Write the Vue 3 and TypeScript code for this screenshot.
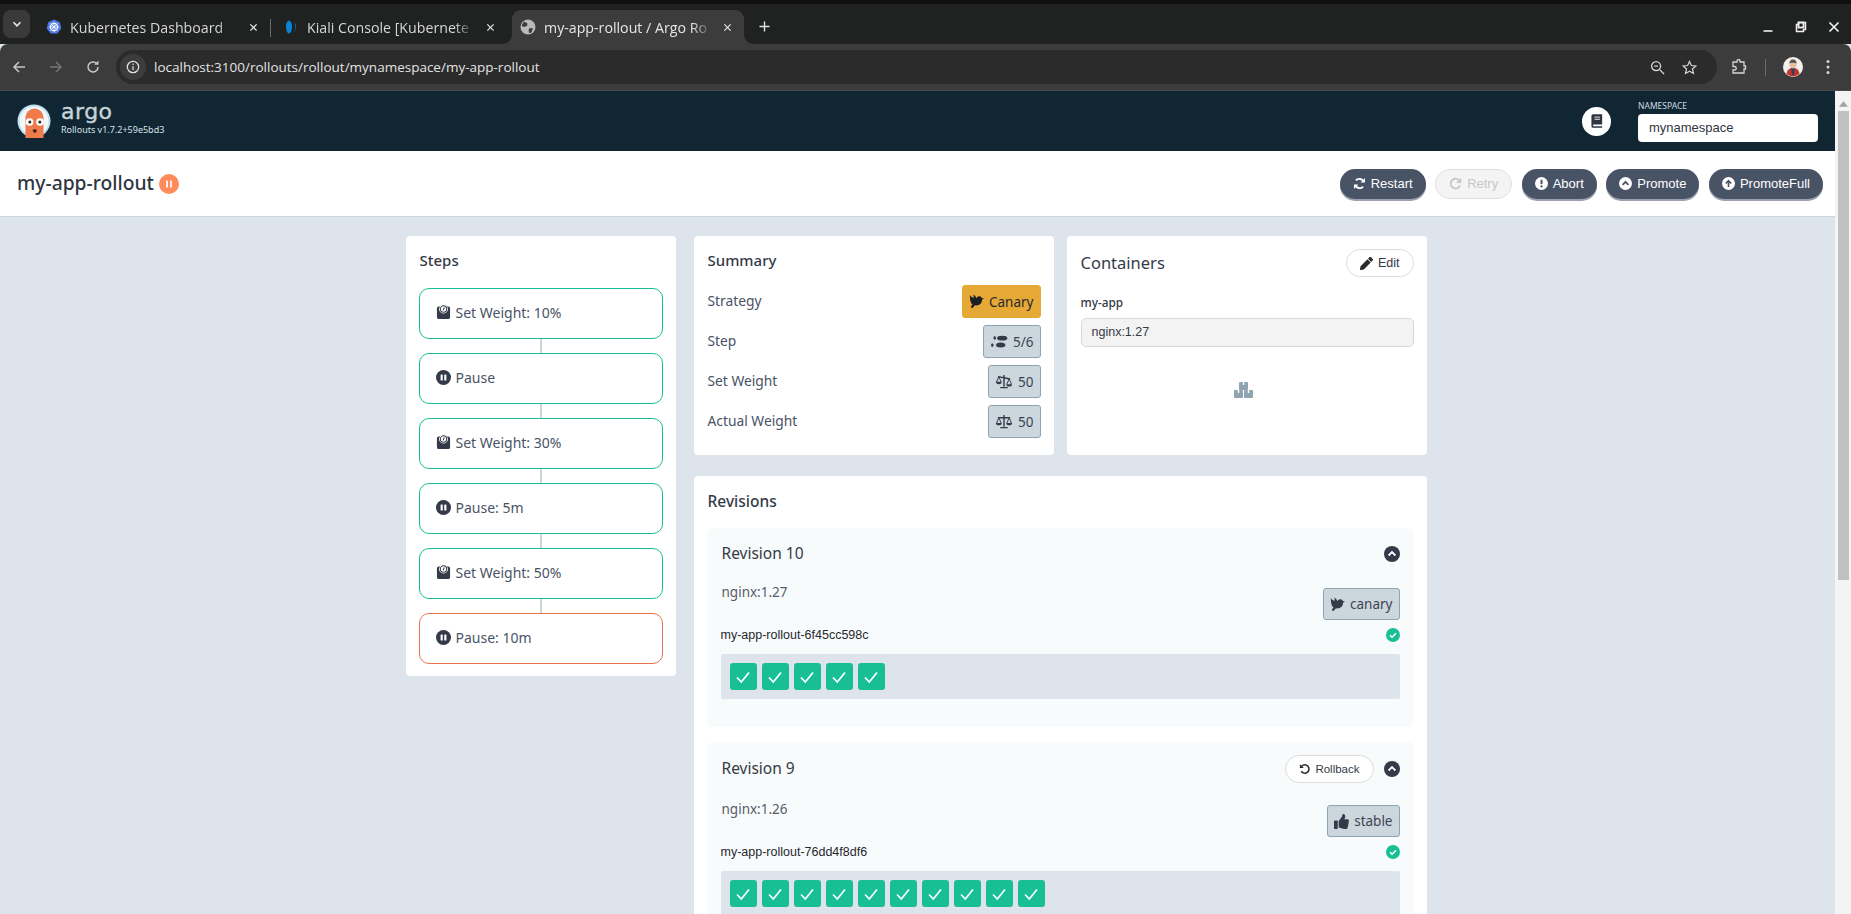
<script setup lang="ts">
interface Step { icon: string; label: string; current?: boolean }
interface Tab { id: string; label: string; active?: boolean }
interface Action { label: string; icon: string; disabled?: boolean }
interface Row { label: string; value: string; icon: string; canary?: boolean }
interface Revision { id: number; image: string; badge: string; icon: string; rs: string; pods: number; rollback?: boolean }

const tabs: Tab[] = [
  { id: 'k8s', label: 'Kubernetes Dashboard' },
  { id: 'kiali', label: 'Kiali Console [Kubernete' },
  { id: 'globe', label: 'my-app-rollout / Argo Ro', active: true },
]
const actions: Action[] = [
  { label: 'Restart', icon: 'i-sync' },
  { label: 'Retry', icon: 'i-redo', disabled: true },
  { label: 'Abort', icon: 'i-excl' },
  { label: 'Promote', icon: 'i-chev' },
  { label: 'PromoteFull', icon: 'i-arrow' },
]
const steps: Step[] = [
  { icon: 'i-weight', label: 'Set Weight: 10%' },
  { icon: 'i-pause', label: 'Pause' },
  { icon: 'i-weight', label: 'Set Weight: 30%' },
  { icon: 'i-pause', label: 'Pause: 5m' },
  { icon: 'i-weight', label: 'Set Weight: 50%' },
  { icon: 'i-pause', label: 'Pause: 10m', current: true },
]
const rows: Row[] = [
  { label: 'Strategy', value: 'Canary', icon: 'i-dove', canary: true },
  { label: 'Step', value: '5/6', icon: 'i-shoes' },
  { label: 'Set Weight', value: '50', icon: 'i-scale-tilt' },
  { label: 'Actual Weight', value: '50', icon: 'i-scale' },
]
const revisions: Revision[] = [
  { id: 10, image: 'nginx:1.27', badge: 'canary', icon: 'i-dove', rs: 'my-app-rollout-6f45cc598c', pods: 5 },
  { id: 9, image: 'nginx:1.26', badge: 'stable', icon: 'i-thumb', rs: 'my-app-rollout-76dd4f8df6', pods: 10, rollback: true },
]
</script>

<template>
  <div class="screen">
    <svg class="sprite" aria-hidden="true">
      <defs>
        <symbol id="i-sync" viewBox="0 0 16 16"><path d="M13.2 6.2A5.6 5.6 0 0 0 3.6 4.3M2.8 9.8a5.6 5.6 0 0 0 9.6 1.9" fill="none" stroke="currentColor" stroke-width="2.4"/><path d="M14.8 1.2v5.6H9.4zM1.2 14.8V9.2h5.4z" fill="currentColor"/></symbol>
        <symbol id="i-redo" viewBox="0 0 16 16"><path d="M12.4 4A6 6 0 1 0 13.6 10.4" fill="none" stroke="currentColor" stroke-width="2.2"/><path d="M15 1v6.4H8.8z" fill="currentColor"/></symbol>
        <symbol id="i-excl" viewBox="0 0 16 16"><circle cx="8" cy="8" r="8" fill="currentColor"/><path d="M8 3.4v5.4" stroke="#495366" stroke-width="2.4"/><circle cx="8" cy="11.6" r="1.4" fill="#495366"/></symbol>
        <symbol id="i-chev" viewBox="0 0 16 16"><circle cx="8" cy="8" r="8" fill="currentColor"/><path d="M4.4 9.6 8 6l3.6 3.6" fill="none" stroke="#495366" stroke-width="2.2"/></symbol>
        <symbol id="i-arrow" viewBox="0 0 16 16"><circle cx="8" cy="8" r="8" fill="currentColor"/><path d="M8 12.4V4.600M4.600 8 8 4.600 11.400 8" fill="none" stroke="#495366" stroke-width="2"/></symbol>
        <symbol id="i-weight" viewBox="0 0 16 16"><path d="M3 1.500h1.400a4.600 4.600 0 1 0 7.200 0H13A2 2 0 0 1 15 3.500V13a2 2 0 0 1-2 2H3a2 2 0 0 1-2-2V3.500a2 2 0 0 1 2-2z" fill="currentColor"/><circle cx="8" cy="4.300" r="3.400" fill="none" stroke="currentColor" stroke-width="1.100"/><path d="M7.500 5.600 8.900 2.700" stroke="currentColor" stroke-width="1.100"/></symbol>
        <symbol id="i-pause" viewBox="0 0 16 16"><circle cx="8" cy="8" r="8" fill="currentColor"/><rect x="4.900" y="4.800" width="2.300" height="6.400" rx=".6" fill="#fff"/><rect x="8.800" y="4.800" width="2.300" height="6.400" rx=".6" fill="#fff"/></symbol>
        <symbol id="i-dove" viewBox="0 0 16 16"><path d="M1 1.200C2 2.800 3.500 3.600 5 4L4.800.6C6.200 1.300 7.200 2.800 7.800 4.600 8.500 3 9.800 2.200 11.200 2.400 12.400 2.500 13.300 3.300 13.600 4.300L15.900 4.900 13.900 6.200C13.900 10 11.200 12.200 8 12.200L6.400 12 3.400 15.200 1.800 13.600 3.800 11.200C1.600 9.500.7 5 1 1.200z" fill="currentColor"/></symbol>
        <symbol id="i-shoes" viewBox="0 0 18 16"><ellipse cx="12.400" cy="4.400" rx="5.400" ry="2.600" fill="currentColor"/><ellipse cx="10.800" cy="11.800" rx="5" ry="2.700" fill="currentColor"/><rect x="3.200" y="2.400" width="2.500" height="3.600" rx="1.200" fill="currentColor"/><rect x=".6" y="10" width="2.500" height="3.600" rx="1.200" fill="currentColor"/></symbol>
        <symbol id="i-scale" viewBox="0 0 18 16"><path d="M9 1v12.500M5 14.500h8M2.500 4h13" stroke="currentColor" stroke-width="1.500" fill="none"/><path d="M3.500 4 1 9.800M3.500 4 6 9.800M14.500 4 12 9.800M14.500 4 17 9.800" stroke="currentColor" stroke-width="1" fill="none"/><path d="M.4 9.500h6.200a3.100 2.600 0 0 1-6.200 0zM11.400 9.500h6.200a3.100 2.600 0 0 1-6.200 0z" fill="currentColor"/></symbol>
        <symbol id="i-scale-tilt" viewBox="0 0 18 16"><path d="M9 1v12.500M5 14.500h8M2.500 2.800l13 2.600" stroke="currentColor" stroke-width="1.500" fill="none"/><path d="M3.500 3 1 8.500M3.500 3 6 8.500M14.500 5.200 12 11M14.500 5.200 17 11" stroke="currentColor" stroke-width="1" fill="none"/><path d="M.4 8.300h6.200a3.100 2.600 0 0 1-6.200 0zM11.400 10.800h6.200a3.100 2.600 0 0 1-6.200 0z" fill="currentColor"/></symbol>
        <symbol id="i-thumb" viewBox="0 0 512 512"><path fill="currentColor" d="M104 224H24c-13.255 0-24 10.745-24 24v240c0 13.255 10.745 24 24 24h80c13.255 0 24-10.745 24-24V248c0-13.255-10.745-24-24-24zM384 81.452c0 42.416-25.97 66.208-33.277 94.548h101.723c33.397 0 59.397 27.746 59.553 58.098.084 17.938-7.546 37.249-19.439 49.197l-.11.11c9.836 23.337 8.237 56.037-9.308 79.469 8.681 25.895-.069 57.704-16.382 74.757 4.298 17.598 2.244 32.575-6.148 44.632C440.202 511.587 389.616 512 346.839 512l-2.845-.001c-48.287-.017-87.806-17.598-119.56-31.725-15.957-7.099-36.821-15.887-52.651-16.178-6.54-.12-11.783-5.457-11.783-11.998v-213.77c0-3.2 1.282-6.271 3.558-8.521 39.614-39.144 56.648-80.587 89.117-113.111 14.804-14.832 20.188-37.236 25.393-58.902C282.515 39.293 291.817 0 312 0c24 0 72 8 72 81.452z"/></symbol>
        <symbol id="i-pencil" viewBox="0 0 512 512"><path fill="currentColor" d="M497.9 142.1l-46.1 46.1c-4.7 4.7-12.3 4.7-17 0l-111-111c-4.7-4.7-4.7-12.3 0-17l46.1-46.1c18.7-18.7 49.1-18.7 67.9 0l60.1 60.1c18.8 18.7 18.8 49.1 0 67.9zM284.2 99.8L21.6 362.4.4 483.9c-2.9 16.4 11.4 30.6 27.8 27.8l121.5-21.3 262.6-262.6c4.7-4.7 4.7-12.3 0-17l-111-111c-4.8-4.7-12.4-4.7-17.1 0z"/></symbol>
      </defs>
    </svg>

    <div class="strip">
      <div class="tab-menu"><svg width="12" height="12" viewBox="0 0 12 12"><path d="M2.500 4.200 6 7.800l3.500-3.600" fill="none" stroke="#e6e6e6" stroke-width="1.600"/></svg></div>
      <div v-for="tab in tabs" :key="tab.id" class="tab" :class="{ active: tab.active }">
        <svg v-if="tab.id === 'k8s'" class="fav" viewBox="0 0 16 16"><path d="M8 .5l5.800 2.800 1.500 6.300-4 5H4.700l-4-5 1.500-6.300z" fill="#4f78e8"/><circle cx="8" cy="8" r="3.600" fill="none" stroke="#fff" stroke-width="1.200"/><path d="M8 2.800v10.400M3 8h10M4.400 4.400l7.200 7.200M11.600 4.400l-7.200 7.200" stroke="#fff" stroke-width=".8"/></svg>
        <svg v-else-if="tab.id === 'kiali'" class="fav" viewBox="0 0 16 16"><ellipse cx="6" cy="8" rx="3" ry="6.400" fill="#0a84d6"/><path d="M10 1.800a3 6.400 0 0 1 0 12.400 8 8 0 0 0 0-12.400z" fill="#0a84d6"/></svg>
        <svg v-else class="fav" viewBox="0 0 16 16"><circle cx="8" cy="8" r="7.500" fill="#b8babd"/><path d="M4 2.600 7.500 4.500 7 7 3.800 8 1.500 6.500zM9.500 9l3.500.5-1.600 4-2.200.8-.6-3z" fill="#3c3c3c"/></svg>
        <span class="tab-label">{{ tab.label }}</span>
        <svg class="tab-close" viewBox="0 0 10 10"><path d="M1.500 1.500l7 7M8.500 1.500l-7 7" stroke="#e3e3e3" stroke-width="1.400"/></svg>
      </div>
      <svg class="tab-plus" viewBox="0 0 12 12"><path d="M6 .5v11M.5 6h11" stroke="#e3e3e3" stroke-width="1.500"/></svg>
      <div class="win">
        <svg viewBox="0 0 12 12"><path d="M1.500 10h9" stroke="#f0f0f0" stroke-width="1.600"/></svg>
        <svg viewBox="0 0 12 12"><path d="M3.500 1.500h7v7h-2v2h-7v-7h2z" fill="none" stroke="#f0f0f0" stroke-width="1.500"/><rect x="3.500" y="1.500" width="5" height="5" fill="none" stroke="#f0f0f0" stroke-width="1.800"/></svg>
        <svg viewBox="0 0 12 12"><path d="M1.500 1.500l9 9M10.500 1.500l-9 9" stroke="#f0f0f0" stroke-width="1.700"/></svg>
      </div>
    </div>

    <div class="toolbar">
      <svg class="nav" viewBox="0 0 16 16"><path d="M14 8H3M8 3 3 8l5 5" fill="none" stroke="#c7c7c7" stroke-width="1.500"/></svg>
      <svg class="nav" viewBox="0 0 16 16"><path d="M2 8h11M8 3l5 5-5 5" fill="none" stroke="#757575" stroke-width="1.500"/></svg>
      <svg class="nav" viewBox="0 0 16 16"><path d="M13 8a5 5 0 1 1-1.500-3.600" fill="none" stroke="#c7c7c7" stroke-width="1.500"/><path d="M13.500 1.500v4.300H9.200z" fill="#c7c7c7"/></svg>
      <div class="omni">
        <span class="info"><svg viewBox="0 0 16 16" width="14" height="14"><circle cx="8" cy="8" r="6.500" fill="none" stroke="#e3e3e3" stroke-width="1.400"/><path d="M8 7.200v4.300" stroke="#e3e3e3" stroke-width="1.400"/><circle cx="8" cy="4.900" r=".9" fill="#e3e3e3"/></svg></span>
        <span class="url">localhost:3100/rollouts/rollout/mynamespace/my-app-rollout</span>
        <svg class="omni-ic zoom" viewBox="0 0 16 16"><circle cx="6.500" cy="6.500" r="4.800" fill="none" stroke="#d5d5d5" stroke-width="1.400"/><path d="M10 10l5 5M4.500 6.500h4" stroke="#d5d5d5" stroke-width="1.400"/></svg>
        <svg class="omni-ic" viewBox="0 0 16 16"><path d="M8 1.500l2 4.400 4.700.5-3.500 3.200 1 4.700L8 11.900l-4.200 2.400 1-4.700L1.300 6.400 6 5.900z" fill="none" stroke="#d5d5d5" stroke-width="1.300"/></svg>
      </div>
      <svg class="ext" viewBox="0 0 16 16"><path d="M2 3h4V2a1.500 1.500 0 0 1 3 0v1h4v4h1.500v3H13v4H2v-3h1.500a1.700 1.700 0 0 0 0-3.500H2z" fill="none" stroke="#d5d5d5" stroke-width="1.300"/></svg>
      <span class="tool-sep"></span>
      <svg class="avatar" viewBox="0 0 20 20"><circle cx="10" cy="10" r="10" fill="#f2f0ee"/><path d="M3.500 17c.5-4 2.500-6 6.500-6s6 2 6.500 6a10 10 0 0 1-13 0z" fill="#c4372e"/><path d="M8 11h4l-1 7H9z" fill="#30415a"/><ellipse cx="10" cy="7" rx="3.600" ry="4.400" fill="#e8c0a0"/><path d="M6.300 6.500C6.500 3.500 8 2.400 10 2.400s3.500 1.100 3.700 4.100C12 5.500 8 5.500 6.300 6.500z" fill="#555"/></svg>
      <svg class="dots" viewBox="0 0 4 16"><circle cx="2" cy="2.500" r="1.500" fill="#d5d5d5"/><circle cx="2" cy="8" r="1.500" fill="#d5d5d5"/><circle cx="2" cy="13.500" r="1.500" fill="#d5d5d5"/></svg>
    </div>

    <div class="viewport">
      <div class="page">
        <header class="topbar">
          <svg class="logo" viewBox="0 0 34 34">
            <circle cx="17" cy="17" r="16.500" fill="#bfe0ee"/>
            <circle cx="17" cy="17" r="14.500" fill="#f2f7fa"/>
            <path d="M8.500 34V13.500a9 9 0 0 1 18 0V34z" fill="#ef7b4d"/>
            <circle cx="12.600" cy="18" r="3.800" fill="#fff"/><circle cx="23" cy="18" r="3.800" fill="#fff"/>
            <circle cx="12.800" cy="18" r="1.500" fill="#2a2a2a"/><circle cx="22.800" cy="18" r="1.500" fill="#2a2a2a"/>
            <path d="M15.800 25.500h4c0 2-.8 3.200-2 3.200s-2-1.200-2-3.200z" fill="#3a1d14"/>
          </svg>
          <div class="brand">
            <div class="argo">argo</div>
            <div class="ver">Rollouts v1.7.2+59e5bd3</div>
          </div>
          <div class="top-right">
            <div class="book"><svg viewBox="0 0 14 16" width="12" height="14"><path d="M2.500 0H13v12H3a1.200 1.200 0 0 0 0 2.200h10V16H2.500A2 2 0 0 1 .5 14V2a2 2 0 0 1 2-2z" fill="#2f3542"/><path d="M4 3.500h6.500M4 6h6.500" stroke="#fff" stroke-width="1"/></svg></div>
            <div class="ns">
              <div class="ns-label">NAMESPACE</div>
              <div class="ns-input">mynamespace</div>
            </div>
          </div>
        </header>

        <div class="titlebar">
          <span class="rollout-name">my-app-rollout</span>
          <span class="pause-badge"><svg viewBox="0 0 16 16" width="8" height="10"><rect x="2" y="1" width="4" height="14" rx="1" fill="#fff" fill-opacity=".85"/><rect x="10" y="1" width="4" height="14" rx="1" fill="#fff" fill-opacity=".85"/></svg></span>
          <div class="actions">
            <button v-for="a in actions" :key="a.label" class="act" :class="{ off: a.disabled }">
              <svg class="act-ic"><use :href="'#' + a.icon" /></svg>{{ a.label }}
            </button>
          </div>
        </div>

        <main class="content">
          <section class="card steps">
            <h3 class="steps-title">Steps</h3>
            <div class="step-list">
              <div v-for="s in steps" :key="s.label" class="step" :class="{ current: s.current }">
                <svg class="step-ic"><use :href="'#' + s.icon" /></svg>
                <span class="step-text">{{ s.label }}</span>
              </div>
            </div>
          </section>

          <div class="right">
            <div class="two">
              <section class="card summary">
                <h3 class="steps-title sum-title">Summary</h3>
                <div v-for="r in rows" :key="r.label" class="sum-row">
                  <span class="sum-label">{{ r.label }}</span>
                  <span class="chip" :class="{ canary: r.canary }">
                    <svg class="chip-ic" :class="{ wide: !r.canary }"><use :href="'#' + r.icon" /></svg>{{ r.value }}
                  </span>
                </div>
              </section>
              <section class="card containers">
                <div class="cont-head">
                  <h3 class="cont-title">Containers</h3>
                  <button class="pill"><svg class="pill-ic"><use href="#i-pencil" /></svg>Edit</button>
                </div>
                <div class="cont-name">my-app</div>
                <div class="cont-input">nginx:1.27</div>
                <div class="boxes">
                  <svg viewBox="0 0 19 16" width="19" height="16"><path d="M6 0h2.800v3h1.400V0H13a1 1 0 0 1 1 1v6a1 1 0 0 1-1 1H6a1 1 0 0 1-1-1V1a1 1 0 0 1 1-1zM1 8h2.800v3h1.400V8H8a1 1 0 0 1 1 1v6a1 1 0 0 1-1 1H1a1 1 0 0 1-1-1V9a1 1 0 0 1 1-1zM11 8h2.800v3h1.400V8H18a1 1 0 0 1 1 1v6a1 1 0 0 1-1 1h-7a1 1 0 0 1-1-1V9a1 1 0 0 1 1-1z" fill="#8fa4b1"/></svg>
                </div>
              </section>
            </div>

            <section class="card revisions">
              <h3 class="rev-heading">Revisions</h3>
              <div v-for="rev in revisions" :key="rev.id" class="rev">
                <div class="rev-head">
                  <span class="rev-title">Revision {{ rev.id }}</span>
                  <button v-if="rev.rollback" class="pill small"><svg class="roll-ic" viewBox="0 0 16 16"><path d="M3.600 4.200A5.600 5.600 0 1 1 3 11" fill="none" stroke="currentColor" stroke-width="2"/><path d="M1.200 1.500v5.300h5.300z" fill="currentColor"/></svg>Rollback</button>
                  <svg class="collapse" viewBox="0 0 16 16"><circle cx="8" cy="8" r="8" fill="#343a4a"/><path d="M4.600 9.500 8 6.100l3.400 3.400" fill="none" stroke="#fff" stroke-width="1.800"/></svg>
                </div>
                <div class="rev-img">
                  <span class="img-name">{{ rev.image }}</span>
                  <span class="chip rev-chip"><svg class="chip-ic"><use :href="'#' + rev.icon" /></svg>{{ rev.badge }}</span>
                </div>
                <div class="rs">
                  <span>{{ rev.rs }}</span>
                  <svg class="ok" viewBox="0 0 14 14"><circle cx="7" cy="7" r="7" fill="#18be94"/><path d="M4 7.200l2.100 2.100L10 5.200" fill="none" stroke="#fff" stroke-width="1.500"/></svg>
                </div>
                <div class="pods">
                  <div v-for="n in rev.pods" :key="n" class="pod"><svg viewBox="0 0 16 16" width="16" height="16"><path d="M2 8.500 6.300 13 14 3.500" fill="none" stroke="#fff" stroke-width="1.700"/></svg></div>
                </div>
              </div>
            </section>
          </div>
        </main>
      </div>
      <div class="scrollbar">
        <svg viewBox="0 0 10 6" width="9" height="6"><path d="M5 0l5 6H0z" fill="#a3a3a3"/></svg>
        <div class="thumb"></div>
      </div>
    </div>
  </div>
</template>

<style>
html, body { margin: 0; overflow: hidden; background: #dee4eb; }
</style>

<style scoped>
.screen { width: 1851px; height: 914px; overflow: hidden; display: flex; flex-direction: column; font-family: "Noto Sans", sans-serif; color: #495366; position: relative; }
.sprite { position: absolute; width: 0; height: 0; }
h3 { margin: 0; font-weight: 500; }
button { font-family: "Liberation Sans", sans-serif; cursor: pointer; }

.strip { height: 40px; flex: none; background: #202222; border-top: 4px solid #101010; display: flex; align-items: flex-end; padding-left: 3px; position: relative; box-sizing: content-box; }
.tab-menu { width: 27px; height: 28px; margin-bottom: 6px; border-radius: 8px; background: #3a3a3a; display: flex; align-items: center; justify-content: center; margin-right: 8px; }
.tab { width: 230px; height: 34px; margin-right: 7px; display: flex; align-items: center; padding-left: 8px; box-sizing: border-box; position: relative; color: #d6d6d6; }
.tab:nth-child(2)::after { content: ""; position: absolute; right: -3px; top: 9px; width: 1px; height: 18px; background: #6b6b6b; }
.tab.active { width: 232px; background: #3c3c3c; border-radius: 9px 9px 0 0; color: #e6e6e6; }
.tab.active::before, .tab.active::after { content: ""; position: absolute; bottom: 0; width: 9px; height: 9px; }
.tab.active::before { left: -9px; background: radial-gradient(circle at 0 0, transparent 8.500px, #3c3c3c 9px); }
.tab.active::after { right: -9px; background: radial-gradient(circle at 100% 0, transparent 8.500px, #3c3c3c 9px); }
.fav { width: 16px; height: 16px; flex: none; }
.tab-label { margin-left: 8px; width: 168px; white-space: nowrap; overflow: hidden; flex: none; -webkit-mask-image: linear-gradient(90deg, #000 88%, transparent); mask-image: linear-gradient(90deg, #000 88%, transparent); font-family: "Open Sans", sans-serif; font-size: 14.200px; }
.tab:first-of-type .tab-label { -webkit-mask-image: none; mask-image: none; }
.tab-close { width: 9px; height: 9px; margin-left: 11px; flex: none; }
.tab-plus { width: 11px; height: 11px; margin: 0 0 12px 8px; }
.win { position: absolute; right: 11px; top: 17px; display: flex; gap: 21px; }
.win svg { width: 12px; height: 12px; }

.toolbar { height: 46px; flex: none; background: #3c3c3c; border-radius: 8px 8px 0 0; display: flex; align-items: center; border-bottom: 1px solid #4a4a4a; box-sizing: content-box; padding-left: 11px; }
.nav { width: 16px; height: 16px; margin-right: 21px; flex: none; }
.nav:nth-child(3) { margin-right: 25px; }
.omni { width: 1601px; height: 34px; margin-left: -10px; border-radius: 17px; background: #2b2b2b; display: flex; align-items: center; flex: none; padding-left: 4px; box-sizing: border-box; color: #e3e3e3; font-size: 13.500px; }
.info { width: 26px; height: 26px; border-radius: 50%; background: #3c3c3c; display: flex; align-items: center; justify-content: center; flex: none; }
.url { margin-left: 8px; flex: 1; font-family: "Open Sans", sans-serif; }
.omni-ic { width: 15px; height: 15px; margin-right: 20px; flex: none; }
.omni-ic.zoom { margin-right: 17px; }
.ext { width: 16px; height: 16px; margin-left: 14px; flex: none; }
.tool-sep { width: 1px; height: 17px; background: #6a6a6a; margin-left: 18px; flex: none; }
.avatar { width: 20px; height: 20px; margin-left: 17px; flex: none; }
.dots { width: 4px; height: 16px; margin-left: 23px; flex: none; }

.viewport { flex: 1; display: flex; min-height: 0; }
.page { flex: 1; min-width: 0; background: #dee4eb; }
.scrollbar { width: 16px; background: #f4f4f4; flex: none; display: flex; flex-direction: column; align-items: center; padding-top: 10px; box-sizing: border-box; }
.thumb { width: 11px; height: 469px; background: #c1c1c1; margin-top: 4px; }

.topbar { height: 60px; background: #102733; display: flex; align-items: center; padding: 0 17px; color: #dee6eb; }
.logo { width: 34px; height: 34px; flex: none; margin-right: 10px; }
.brand { margin-top: -7px; }
.argo { font-family: "DejaVu Sans", sans-serif; font-size: 22px; line-height: 23px; color: #c9d3d9; letter-spacing: .5px; -webkit-text-stroke: .4px #c9d3d9; }
.ver { font-size: 9px; line-height: 11px; color: #d8e2ea; margin-top: 1px; }
.top-right { margin-left: auto; display: flex; align-items: center; }
.book { width: 29px; height: 29px; border-radius: 50%; background: #fff; display: flex; align-items: center; justify-content: center; margin-right: 27px; }
.ns-label { font-size: 8.500px; line-height: 12px; color: #cfd9e0; margin-bottom: 2px; }
.ns-input { width: 180px; height: 28px; background: #fff; border-radius: 4px; font-family: "Liberation Sans", sans-serif; font-size: 13px; color: #2f3542; line-height: 28px; padding-left: 11px; box-sizing: border-box; }

.titlebar { height: 66px; background: #fff; border-bottom: 1px solid #ccd6dd; display: flex; align-items: center; padding: 0 12px 0 17px; box-sizing: border-box; }
.rollout-name { font-size: 19.300px; font-weight: 500; color: #2f3542; line-height: 26px; margin-top: -2px; }
.pause-badge { width: 20px; height: 20px; border-radius: 50%; background: #ff8a5c; margin-left: 5px; display: flex; align-items: center; justify-content: center; }
.actions { margin-left: auto; display: flex; gap: 9.500px; }
.act { height: 30px; border: 0; border-radius: 15px; padding: 0 13px; background: #495366; color: #fff; font-size: 13px; display: flex; align-items: center; box-shadow: 0 2px 0 #9aa3ad; }
.act.off { background: #f4f4f4; color: #c6c6c6; border: 1px solid #dfdfdf; box-shadow: none; }
.act-ic { width: 13px; height: 13px; margin-right: 5px; }

.content { display: flex; justify-content: center; gap: 18px; align-items: flex-start; padding-top: 19px; padding-right: 3px; }
.card { background: #fff; border-radius: 4px; padding: 13px; box-sizing: border-box; }
.steps { width: 270px; height: 440px; }
.steps-title { font-size: 15px; line-height: 20px; margin: 1px 0 18px 1px; color: #343a47; }
.step-list { display: flex; flex-direction: column; gap: 14px; }
.step { height: 51px; border: 1px solid #18be94; border-radius: 10px; box-sizing: border-box; display: flex; align-items: center; padding-left: 16px; font-size: 14px; position: relative; }
.step:not(:last-child)::after { content: ""; position: absolute; left: 120px; top: 50px; width: 2px; height: 14px; background: #ccd6dd; }
.step.current { border-color: #e9734f; }
.step-ic { width: 15px; height: 15px; margin: -2px 5px 0 0; color: #343a47; flex: none; }
.step-text { margin-top: -2px; }

.right { width: 733px; display: flex; flex-direction: column; gap: 21px; }
.two { display: flex; gap: 13px; }
.summary, .containers { width: 360px; height: 219px; }
.sum-title { margin-bottom: 15px; }
.sum-row { display: flex; justify-content: space-between; align-items: center; height: 33px; margin-bottom: 7px; font-size: 13.800px; }
.sum-label { margin: -2px 0 0 1px; }
.chip { height: 33px; border: 1px solid #8fa4b1; background: #ccd6dd; border-radius: 3px; display: inline-flex; align-items: center; padding: 0 6px; box-sizing: border-box; font-size: 13.500px; color: #3c4454; }
.chip.canary { background: #e6a935; border-color: #e6a935; color: #26282e; }
.chip-ic { width: 15px; height: 15px; margin-right: 5px; flex: none; color: #343a47; }
.chip-ic.wide { width: 18px; }
.canary .chip-ic { color: #1d1f24; }

.containers { padding-left: 14px; }
.cont-head { display: flex; justify-content: space-between; align-items: center; height: 28px; }
.cont-title { font-size: 16.500px; color: #343a47; font-weight: 400; margin-top: -2px; }
.pill { height: 28px; border: 1px solid #dcdcdc; border-radius: 14px; background: #fff; color: #2f3542; font-size: 12.500px; display: inline-flex; align-items: center; padding: 0 13px; box-sizing: border-box; }
.pill-ic { width: 13px; height: 13px; margin-right: 5px; color: #2a2a2a; }
.cont-name { font-size: 11.800px; font-weight: 500; color: #343a47; margin-top: 17px; line-height: 16px; }
.cont-input { height: 29px; margin-top: 8px; background: #f3f3f3; border: 1px solid #d8d8d8; border-radius: 5px; box-sizing: border-box; padding-left: 10px; font-family: "Liberation Sans", sans-serif; font-size: 12.500px; line-height: 27px; color: #343a47; }
.boxes { display: flex; justify-content: center; margin-top: 35px; padding-right: 8px; }

.revisions { height: 520px; }
.rev-heading { font-size: 15.500px; line-height: 22px; color: #343a47; margin: 1px 0 16px 1px; }
.rev { background: #f8fbfb; border-radius: 6px; padding: 12px 14px 28px; margin-bottom: 15px; }
.rev-head { display: flex; align-items: center; min-height: 27px; }
.rev-title { font-size: 15.500px; color: #343a47; font-weight: 400; flex: 1; line-height: 22px; margin: -2px 0 0 1px; }
.pill.small { font-size: 11.500px; padding: 0 13px; margin: 1px 0; color: #343a47; }
.roll-ic { width: 12px; height: 12px; margin-right: 4px; color: #2a2a2a; }
.collapse { width: 16px; height: 16px; margin-left: 10px; }
.rev-img { display: flex; justify-content: space-between; align-items: flex-start; margin-top: 21px; }
.img-name { font-size: 13.500px; line-height: 20px; color: #555d6c; margin: -6px 0 0 1px; }
.rev-chip { height: 32px; font-size: 13.500px; }
.rs { display: flex; justify-content: space-between; align-items: center; margin-top: 5px; height: 20px; font-family: "Liberation Sans", sans-serif; font-size: 12.500px; color: #26282e; }
.ok { width: 14px; height: 14px; }
.pods { margin-top: 9px; height: 45px; padding: 9px; box-sizing: border-box; background: #dee4eb; border-radius: 2px; display: flex; gap: 5px; }
.pod { width: 27px; height: 27px; border-radius: 3px; background: #18be94; display: flex; align-items: center; justify-content: center; }
</style>
